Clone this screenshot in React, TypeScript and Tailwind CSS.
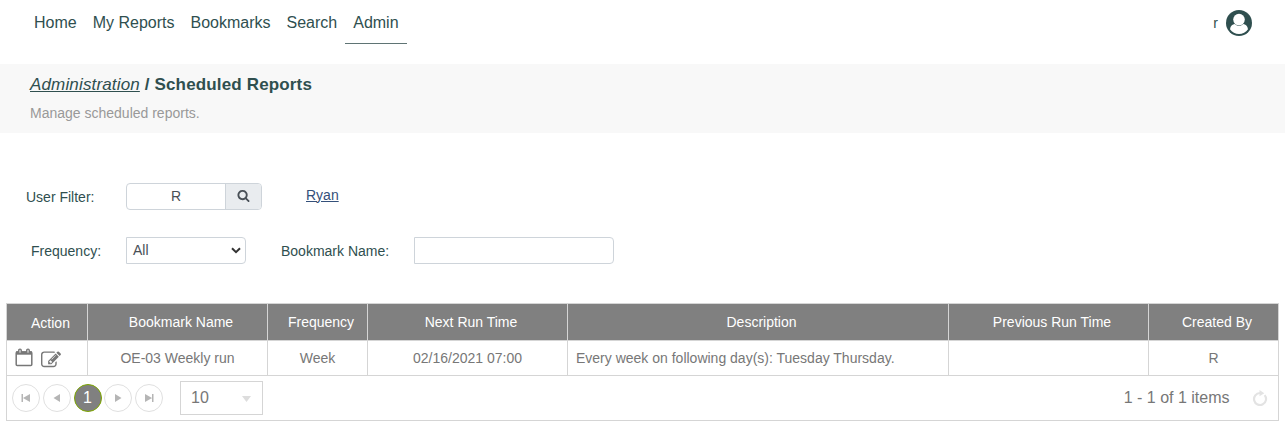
import { useState, type ReactNode } from "react";

const navItems = ["Home", "My Reports", "Bookmarks", "Search", "Admin"];

const columns = [
  { title: "Action", width: "w-[81px]" },
  { title: "Bookmark Name", width: "w-[180px]" },
  { title: "Frequency", width: "w-[100px]" },
  { title: "Next Run Time", width: "w-[200px]" },
  { title: "Description", width: "w-[381px]" },
  { title: "Previous Run Time", width: "w-[200px]" },
  { title: "Created By", width: "w-[129px]" },
];

function UserIcon() {
  return (
    <svg className="h-[26px] w-[26px]" viewBox="0 0 26 26">
      <circle cx="13" cy="13" r="13" fill="#2f4f4f" />
      <path
        d="M4 19.2C4.5 16.2 6.2 14.3 8.8 14.1Q13 17.9 17.2 14.1C19.8 14.3 21.5 16.2 22 19.2A11 11 0 0 1 4 19.2z"
        fill="#fff"
      />
      <circle cx="13" cy="9.6" r="5.8" fill="#fff" />
    </svg>
  );
}

function SearchIcon() {
  return (
    <svg className="h-[13px] w-[13px]" viewBox="0 0 1792 1792" fill="#495057">
      <path d="M1216 832q0-185-131.5-316.5t-316.5-131.5-316.5 131.5-131.5 316.5 131.5 316.5 316.5 131.5 316.5-131.5 131.5-316.5zm512 832q0 52-38 90t-90 38q-54 0-90-38l-343-342q-179 124-399 124-143 0-273.5-55.5t-225-150-150-225-55.5-273.5 55.5-273.5 150-225 225-150 273.5-55.5 273.5 55.5 225 150 150 225 55.5 273.5q0 220-124 399l343 343q37 37 37 91z" />
    </svg>
  );
}

function CalendarIcon() {
  return (
    <svg className="mb-[2px] h-[19px] w-[18px]" viewBox="0 0 18 19" fill="none" stroke="#777">
      <rect x="1.2" y="4" width="15.6" height="13.6" rx="1" strokeWidth="1.5" />
      <path d="M1 5h16" strokeWidth="3.4" />
      <rect x="3.7" y="1.2" width="2.6" height="4.2" rx="1.2" fill="#ddd" strokeWidth="1.3" />
      <rect x="11.7" y="1.2" width="2.6" height="4.2" rx="1.2" fill="#ddd" strokeWidth="1.3" />
    </svg>
  );
}

function EditIcon() {
  return (
    <svg className="mt-[3px] h-5 w-5" viewBox="0 0 1792 1792" fill="#777">
      <path d="M888 1184l116-116-152-152-116 116v56h96v96h56zm440-720q-16-16-33 1l-350 350q-17 17-1 33t33-1l350-350q17-17 1-33zm80 594v190q0 119-84.5 203.5t-203.5 84.5h-832q-119 0-203.5-84.5t-84.5-203.5v-832q0-119 84.5-203.5t203.5-84.5h832q63 0 117 25 15 7 18 23 3 17-9 29l-49 49q-14 14-32 8-23-6-45-6h-832q-66 0-113 47t-47 113v832q0 66 47 113t113 47h832q66 0 113-47t47-113v-126q0-13 9-22l64-64q15-15 35-7t20 29zm-96-738l288 288-672 672h-288v-288zm444 132l-92 92-288-288 92-92q28-28 68-28t68 28l152 152q28 28 28 68t-28 68z" />
    </svg>
  );
}

function PagerButton({ label, children }: { label: string; children: ReactNode }) {
  return (
    <button
      aria-label={label}
      className="flex h-7 w-7 items-center justify-center rounded-full border border-[#e0e0e0]"
    >
      <svg className="h-4 w-4" viewBox="0 0 16 16" fill="#b5b5b5">
        {children}
      </svg>
    </button>
  );
}

export default function App() {
  const [userFilter, setUserFilter] = useState("R");
  const [bookmarkName, setBookmarkName] = useState("");

  return (
    <div
      className="h-[428px] w-[1285px] overflow-hidden bg-white text-sm leading-5 text-[#2f4f4f]"
      style={{ fontFamily: '"Liberation Sans", Arial, sans-serif' }}
    >
      <nav className="flex h-16 items-start justify-between pl-[26px] pr-[33px]">
        <div className="flex text-base leading-6">
          {navItems.map((item) => (
            <a
              key={item}
              href="#"
              className={
                item === "Admin"
                  ? "h-11 border-b border-[#5f7474] px-2 pt-[11px]"
                  : "h-11 px-2 pt-[11px]"
              }
            >
              {item}
            </a>
          ))}
        </div>
        <div className="flex items-center gap-2 pt-[10px]">
          <span>r</span>
          <UserIcon />
        </div>
      </nav>

      <header className="h-[69px] bg-[#f8f8f8] pl-[30px] pt-[9px]">
        <h1 className="text-[17px] font-bold leading-6 tracking-[0.009em]">
          <a href="#" className="font-normal italic underline">
            Administration
          </a>{" "}
          / Scheduled Reports
        </h1>
        <p className="mt-[6px] text-[#999]">Manage scheduled reports.</p>
      </header>

      <section className="h-[170px] pt-[50px]">
        <div className="flex h-[27px] items-center">
          <label className="w-[126px] pl-[26px]">User Filter:</label>
          <div className="flex h-[27px] w-[136px] overflow-hidden rounded border border-[#ced4da]">
            <input
              value={userFilter}
              onChange={(e) => setUserFilter(e.target.value)}
              className="w-[98px] pb-[2px] text-center text-[#495057] outline-none"
            />
            <button className="flex flex-1 items-center justify-center border-l border-[#ced4da] bg-[#e9ecef] pb-[2px]">
              <SearchIcon />
            </button>
          </div>
          <a href="#" className="ml-11 pb-[4px] text-[#34507a] underline">
            Ryan
          </a>
        </div>

        <div className="mt-[27px] flex h-[27px] items-center">
          <label className="w-[126px] pl-[31px]">Frequency:</label>
          <button className="flex h-[27px] w-[120px] items-center justify-between rounded-r border border-[#ced4da] pb-px pl-[6px] pr-[4px] text-[#495057]">
            All
            <svg className="h-[7px] w-[10px]" viewBox="0 0 10 7">
              <path d="M1 1.2l4 4 4-4" fill="none" stroke="#333" strokeWidth="2" />
            </svg>
          </button>
          <label className="ml-[35px] w-[133px]">Bookmark Name:</label>
          <input
            value={bookmarkName}
            onChange={(e) => setBookmarkName(e.target.value)}
            className="h-[27px] w-[200px] rounded-r border border-[#ced4da] px-2 outline-none"
          />
        </div>
      </section>

      <div className="ml-[6px] h-[118px] w-[1273px] border border-[#d5d5d5] text-[#777]">
        <table className="w-[1271px] table-fixed border-separate border-spacing-0">
          <colgroup>
            {columns.map((column) => (
              <col key={column.title} className={column.width} />
            ))}
          </colgroup>
          <thead>
            <tr className="h-9 bg-[#808080] text-white">
              {columns.map((column) => (
                <th
                  key={column.title}
                  className={
                    column.title === "Action"
                      ? "border-r border-[#d5d5d5] p-0 pl-[7px] pt-[2px] font-normal"
                      : "border-r border-[#d5d5d5] p-0 pl-[7px] font-normal last:border-r-0"
                  }
                >
                  {column.title}
                </th>
              ))}
            </tr>
          </thead>
          <tbody>
            <tr className="h-9 text-center [&>td]:border-y [&>td]:border-r [&>td]:border-[#d5d5d5] [&>td:last-child]:border-r-0">
              <td className="p-0">
                <div className="flex h-[22px] items-center gap-2 pl-2">
                  <CalendarIcon />
                  <EditIcon />
                </div>
              </td>
              <td className="p-0">OE-03 Weekly run</td>
              <td className="p-0">Week</td>
              <td className="p-0">02/16/2021 07:00</td>
              <td className="p-0 pl-2 text-left">
                Every week on following day(s): Tuesday Thursday.
              </td>
              <td className="p-0"></td>
              <td className="p-0">R</td>
            </tr>
          </tbody>
        </table>

        <div className="flex h-11 items-center pl-[5px] pr-[10px] text-base">
          <div className="flex gap-[2.75px]">
            <PagerButton label="First page">
              <path d="M3.5 4H5v8H3.5zM12 4v8L5 8z" />
            </PagerButton>
            <PagerButton label="Previous page">
              <path d="M11 4v8L4.5 8z" />
            </PagerButton>
            <button className="flex h-7 w-7 items-center justify-center rounded-full border border-[#7ea700] bg-[#808080] text-white">
              1
            </button>
            <PagerButton label="Next page">
              <path d="M5 4v8l6.5-4z" />
            </PagerButton>
            <PagerButton label="Last page">
              <path d="M4 4v8l7-4zM11 4h1.5v8H11z" />
            </PagerButton>
          </div>
          <button className="ml-[17px] flex h-[34px] w-[83px] items-center justify-between border border-[#d5d5d5] pl-[10px] pr-[11px]">
            10
            <svg className="mt-[2px] h-[6px] w-[9px]" viewBox="0 0 9 6" fill="#ddd">
              <path d="M0 0h9L4.5 6z" />
            </svg>
          </button>
          <span className="ml-auto">1 - 1 of 1 items</span>
          <svg className="ml-[22.5px] h-4 w-4" viewBox="0 0 16 16">
            <path d="M12.6 5.1A6 6 0 1 1 8 3" fill="none" stroke="#e3e3e3" strokeWidth="2.2" />
            <path d="M7.5 0l4.8 3.2-4.8 3z" fill="#e3e3e3" />
          </svg>
        </div>
      </div>
    </div>
  );
}
